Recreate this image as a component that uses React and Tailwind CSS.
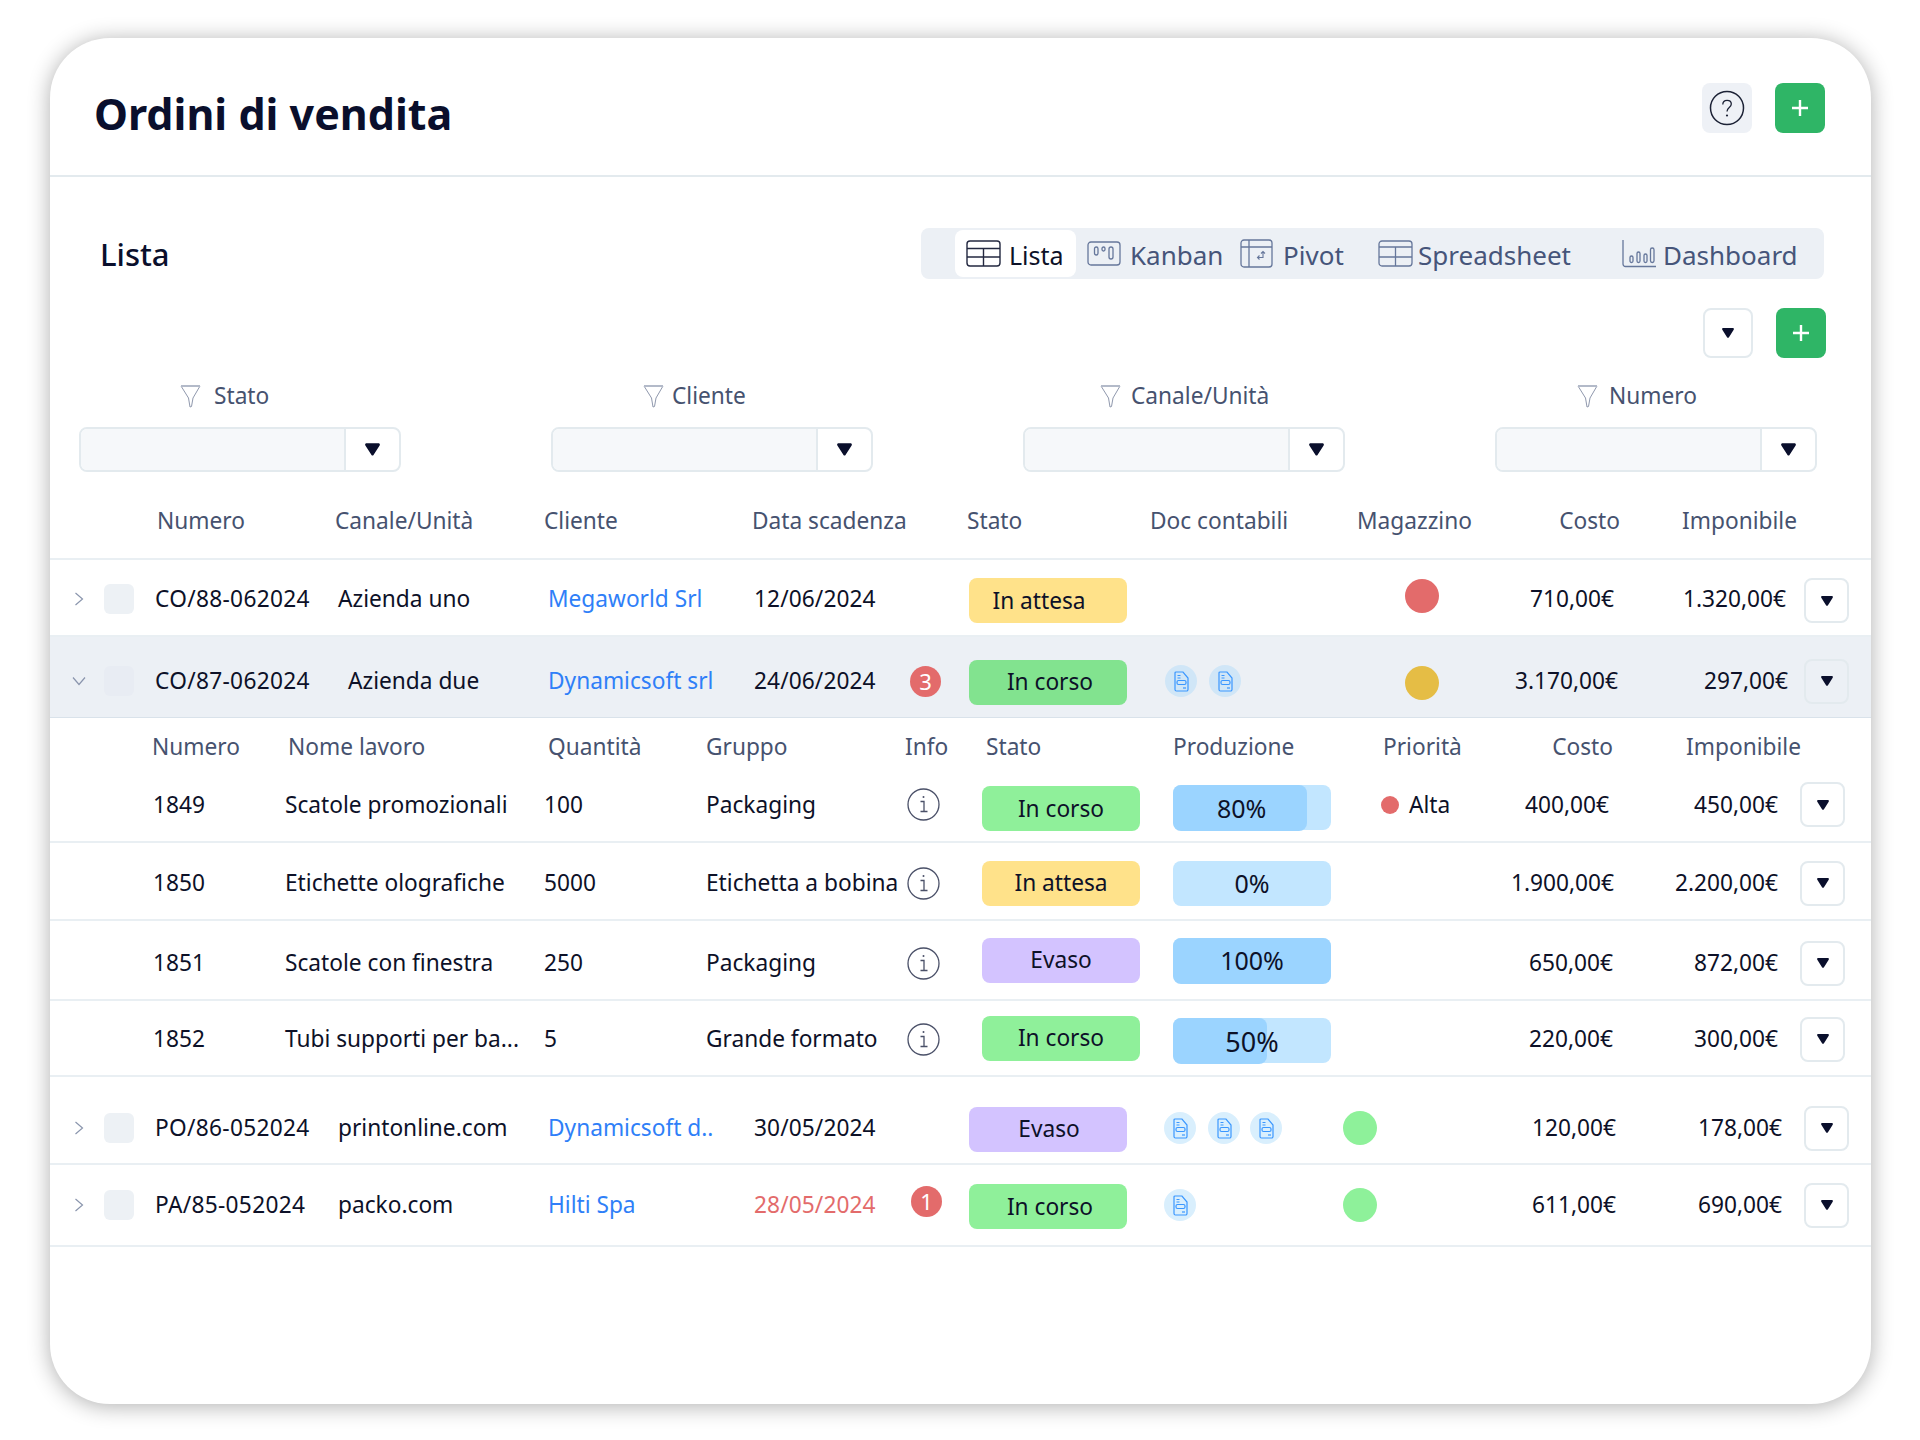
import React from 'react';

const MAIN_COLS = 'grid grid-cols-[54px_51px_183px_210px_206px_155px_61px_194px_179px_147px_130px_184px_1fr] items-center';
const SUB_COLS = 'grid grid-cols-[103px_132px_259px_162px_201px_76px_190px_208px_109px_130px_181px_1fr] items-center';

const PILL = {
  attesa: 'bg-[#ffe28a]',
  corso: 'bg-[#8ff09a]',
  corsoDark: 'bg-[#82e38f]',
  evaso: 'bg-[#d3c3ff]',
};

const Chevron = ({ open }) => (
  <svg width="16" height="16" viewBox="0 0 16 16" fill="none" stroke="#8a95ad" strokeWidth="1.2" className="ml-[21px]">
    {open ? <path d="M2 4.5 8 11.5 14 4.5" /> : <path d="M4.5 2 11.5 8 4.5 14" />}
  </svg>
);

const Caret = ({ className = 'w-[12px] h-[10px]' }) => (
  <svg viewBox="0 0 12 10" className={className} fill="#0a0f2c">
    <path d="M1.2 0h9.6c.9 0 1.4 1 .9 1.7L6.8 9.4c-.4.6-1.2.6-1.6 0L.3 1.7C-.2 1 .3 0 1.2 0z" />
  </svg>
);

const Plus = () => (
  <svg width="18" height="18" viewBox="0 0 18 18" stroke="#fff" strokeWidth="2.4" fill="none">
    <path d="M9 1v16M1 9h16" />
  </svg>
);

const Funnel = () => (
  <svg width="21" height="23" viewBox="0 0 21 23" fill="none" stroke="#8f98ad" strokeWidth="1">
    <path d="M1 1h19L13 13 11.500 21.500 10 22 8.500 13z" />
    <path d="M1 1h19" strokeWidth="2" stroke="#b3bac9" />
  </svg>
);

const DocIcon = ({ className = '' }) => (
  <span className={`w-[32px] h-[32px] rounded-full flex items-center justify-center shrink-0 ${className}`}>
    <svg width="15" height="21" viewBox="0 0 15 21" fill="none" stroke="#3a97ff" strokeWidth="1.200">
      <path d="M2 1h7l5 6v11.500a1.500 1.500 0 0 1-1.500 1.500h-10A1.500 1.500 0 0 1 1 18.500V2a1 1 0 0 1 1-1z" />
      <path d="M3.500 4.500h3M3.500 7h3" />
      <rect x="3" y="9.500" width="9" height="4" rx="1.500" />
      <path d="M9 17h3" />
    </svg>
  </span>
);

const InfoIcon = () => (
  <svg width="33" height="33" viewBox="0 0 33 33" fill="none" stroke="#4a5068" strokeWidth="1.300">
    <circle cx="16.500" cy="16.500" r="15.500" />
    <path d="M13.500 13.500h3.500v10M13.500 23.500h7" />
    <circle cx="16.500" cy="9" r="1" fill="#4a5068" stroke="none" />
  </svg>
);

const HelpIcon = () => (
  <svg width="36" height="36" viewBox="0 0 36 36" fill="none" stroke="#1c2236" strokeWidth="1.500">
    <circle cx="18" cy="18" r="16.500" />
    <path d="M13.800 14.500c0-2.600 2-4.200 4.300-4.200s4.200 1.500 4.200 3.800c0 3.600-4.300 3.400-4.300 7.400" strokeWidth="1.300" />
    <circle cx="18" cy="25.500" r="1.100" fill="#1c2236" stroke="none" />
  </svg>
);

const ListaIcon = ({ color }) => (
  <svg width="35" height="27" viewBox="0 0 35 27" fill="none" stroke={color} strokeWidth="1.400">
    <rect x="1" y="1" width="33" height="25" rx="3" />
    <path d="M1 8.500h33M1 17h33M17.500 8.500V26" />
  </svg>
);

const KanbanIcon = () => (
  <svg width="34" height="25" viewBox="0 0 34 25" fill="none" stroke="#66779b" strokeWidth="1.300">
    <rect x="1" y="1" width="32" height="23" rx="3" />
    <rect x="7.500" y="6" width="3.500" height="8" rx="1.700" />
    <rect x="15" y="6" width="3" height="4" rx="1.500" />
    <rect x="22" y="6" width="4" height="12" rx="2" />
  </svg>
);

const PivotIcon = () => (
  <svg width="33" height="29" viewBox="0 0 33 29" fill="none" stroke="#66779b" strokeWidth="1.300">
    <rect x="1" y="1" width="31" height="27" rx="3" />
    <path d="M1 8h31M9 1v27" />
    <path d="M23 13v5.500h-5M19.500 16.500l-2 2 2 2M21 14.500l2-2 2 2" strokeWidth="1.100" />
  </svg>
);

const SheetIcon = () => (
  <svg width="35" height="27" viewBox="0 0 35 27" fill="none" stroke="#66779b" strokeWidth="1.300">
    <rect x="1" y="1" width="33" height="25" rx="3" />
    <path d="M1 7h33M1 17h33M17.500 7v19" />
  </svg>
);

const DashIcon = () => (
  <svg width="35" height="29" viewBox="0 0 35 29" fill="none" stroke="#66779b" strokeWidth="1.300">
    <path d="M1 1v24a2.500 2.500 0 0 0 2.500 2.500H34" />
    <rect x="8" y="17" width="3" height="6.500" rx="1.500" />
    <rect x="15" y="13" width="3" height="10.500" rx="1.500" />
    <rect x="22" y="15" width="3" height="8.500" rx="1.500" />
    <rect x="28.500" y="9" width="3.500" height="14.500" rx="1.700" />
  </svg>
);

const GreenButton = () => (
  <button className="w-[50px] h-[50px] rounded-lg bg-[#2fb566] flex items-center justify-center">
    <Plus />
  </button>
);

const ActionButton = ({ className = '' }) => (
  <button className={`w-[45px] h-[45px] rounded-lg border-2 border-[#e3eaee] flex items-center justify-center ${className}`}>
    <Caret />
  </button>
);

const Pill = ({ kind, className = '', children }) => (
  <div className={`w-[158px] h-[45px] rounded-lg flex items-center justify-center text-[#0d1128] ${PILL[kind]} ${className}`}>
    {children}
  </div>
);

const Progress = ({ value, label, className = '', textClass = 'text-[25px]' }) => (
  <div className={`relative w-[158px] h-[45px] rounded-lg bg-[#c2e6ff] flex items-center justify-center text-[#0d1128] ${className}`}>
    {value > 0 && (
      <div className="absolute left-0 top-0 h-[46px] rounded-lg bg-[#9bd4ff]" style={{ width: `${value}px` }} />
    )}
    <span className={`relative ${textClass}`}>{label}</span>
  </div>
);

const Badge = ({ n, className = '' }) => (
  <div className={`w-[31px] h-[31px] rounded-full bg-[#e36b6b] text-white flex items-center justify-center text-[22px] ${className}`}>{n}</div>
);

const Dot = ({ color }) => (
  <div className={`w-[34px] h-[34px] rounded-full ${color}`} />
);

const FilterSelect = ({ label, pad, gap }) => (
  <div className="w-[322px]">
    <div className={`h-[30px] flex items-center text-[#46526f] ${pad} ${gap}`}>
      <Funnel />
      <span>{label}</span>
    </div>
    <div className="mt-[16px] h-[45px] rounded-lg border-2 border-[#e3eaee] flex overflow-hidden">
      <div className="flex-1 bg-[#f6f8fa] border-r-2 border-[#e3eaee]" />
      <div className="w-[53px] flex items-center justify-center"><Caret className="w-[15px] h-[13px]" /></div>
    </div>
  </div>
);

const pillLabel = (pill) => (pill === 'evaso' ? 'Evaso' : pill === 'attesa' ? 'In attesa' : 'In corso');

const OrderRow = ({ open, rowClass, numero, canale, canaleClass = '', cliente, data, dataClass = 'text-[#0d1128]', badge, badgeClass, pill, pillClass, docs = [], dotColor, dotClass, costo, costoClass, imp, impClass, actionClass }) => (
  <div className={`${MAIN_COLS} ${rowClass}`}>
    <div><Chevron open={open} /></div>
    <div className={`w-[30px] h-[30px] rounded-md ${open ? 'bg-[#e8ecf3]' : 'bg-[#edf1f5]'}`} />
    <div className="tracking-[0.3px]">{numero}</div>
    <div className={canaleClass}>{canale}</div>
    <div className="text-[#2f7ff8]">{cliente}</div>
    <div className={`tracking-[0.1px] ${dataClass}`}>{data}</div>
    <div>{badge && <Badge n={badge} className={badgeClass} />}</div>
    <div className="-ml-px"><Pill kind={pill} className={pillClass}>{pillLabel(pill)}</Pill></div>
    <div className="flex">
      {docs.map((cls, i) => <DocIcon key={i} className={cls} />)}
    </div>
    <div className={dotClass}><Dot color={dotColor} /></div>
    <div className={`text-right ${costoClass}`}>{costo}</div>
    <div className={`text-right ${impClass}`}>{imp}</div>
    <div><ActionButton className={actionClass} /></div>
  </div>
);

const SubRow = ({ rowClass, numero, nome, qty, gruppo, pill, pillClass, progress, priority, costo, costoClass, imp }) => (
  <div className={`${SUB_COLS} border-b-2 border-[#e9eff3] ${rowClass}`}>
    <div />
    <div>{numero}</div>
    <div>{nome}</div>
    <div>{qty}</div>
    <div>{gruppo}</div>
    <div><InfoIcon /></div>
    <div className="-ml-px"><Pill kind={pill} className={pillClass}>{pillLabel(pill)}</Pill></div>
    <div>{progress}</div>
    <div className="flex items-center gap-[10px]">
      {priority && <><span className="w-[18px] h-[18px] rounded-full bg-[#e36b6b]" /><span>{priority}</span></>}
    </div>
    <div className={`text-right ${costoClass}`}>{costo}</div>
    <div className="text-right pr-[23px]">{imp}</div>
    <div className="-ml-px"><ActionButton /></div>
  </div>
);

const App = () => {
  return (
    <div className="w-[1920px] h-[1440px] bg-white pt-[38px] pl-[50px] font-['Noto_Sans',sans-serif] text-[22.7px] leading-[30px] text-[#0d1128]">
      <div className="w-[1821px] h-[1366px] bg-white rounded-[60px] shadow-[0_2px_22px_rgba(0,0,0,0.32)]">
        {/* intestazione */}
        <div className="h-[139px] border-b-2 border-[#e3eaee] flex items-center justify-between pl-[44px] pr-[46px]">
          <h1 className="text-[43px] leading-[56px] font-bold text-[#0a0f2c] pt-[14px]">Ordini di vendita</h1>
          <div className="flex items-center gap-[23px] pt-[3px]">
            <button className="w-[50px] h-[50px] rounded-lg bg-[#eef1f6] flex items-center justify-center"><HelpIcon /></button>
            <GreenButton />
          </div>
        </div>

        {/* lista e viste */}
        <div className="mt-[51px] h-[51px] flex items-center justify-between pl-[50px] pr-[47px]">
          <h2 className="text-[31px] leading-[40px] font-medium text-[#0a0f2c]">Lista</h2>
          <div className="w-[903px] h-[51px] rounded-lg bg-[#ecf0f5] flex items-center pl-[34px] text-[26px] text-[#46557a]">
            <div className="w-[121px] h-[47px] rounded-lg bg-white flex items-center gap-[8px] pl-[11px] mr-[11px] text-[25px] text-[#0d1128]"><ListaIcon color="#232840" /><span className="pt-[2px]">Lista</span></div>
            <div className="w-[153px] flex items-center gap-[9px]"><KanbanIcon /><span className="pt-[2px]">Kanban</span></div>
            <div className="w-[138px] flex items-center gap-[10px]"><PivotIcon /><span className="pt-[2px]">Pivot</span></div>
            <div className="w-[244px] flex items-center gap-[5px]"><SheetIcon /><span className="pt-[2px]">Spreadsheet</span></div>
            <div className="flex items-center gap-[6px]"><DashIcon /><span className="pt-[2px]">Dashboard</span></div>
          </div>
        </div>

        <div className="mt-[29px] flex justify-end gap-[23px] pr-[45px]">
          <button className="w-[50px] h-[50px] rounded-lg border-2 border-[#e3eaee] flex items-center justify-center"><Caret /></button>
          <GreenButton />
        </div>

        {/* filtri */}
        <div className="mt-[23px] flex gap-[150px] pl-[29px]">
          <FilterSelect label="Stato" pad="pl-[101px]" gap="gap-[13px]" />
          <FilterSelect label="Cliente" pad="pl-[92px]" gap="gap-[8px]" />
          <FilterSelect label="Canale/Unità" pad="pl-[77px]" gap="gap-[10px]" />
          <FilterSelect label="Numero" pad="pl-[82px]" gap="gap-[11px]" />
        </div>

        {/* tabella */}
        <div className={`${MAIN_COLS} h-[88px] pt-[12px] border-b-2 border-[#e9eff3] text-[#46526f]`}>
          <div />
          <div />
          <div className="pl-[2px]">Numero</div>
          <div className="-ml-[3px]">Canale/Unità</div>
          <div className="-ml-[4px]">Cliente</div>
          <div className="-ml-[2px]">Data scadenza</div>
          <div />
          <div className="-ml-[3px]">Stato</div>
          <div className="-ml-[14px]">Doc contabili</div>
          <div className="pl-[14px]">Magazzino</div>
          <div className="text-right">Costo</div>
          <div className="text-right pr-[7px]">Imponibile</div>
          <div />
        </div>

        <OrderRow rowClass="h-[77px] pt-[2px] border-b-2 border-[#e9eff3]" numero="CO/88-062024" canale="Azienda uno" cliente="Megaworld Srl" data="12/06/2024"
          pill="attesa" pillClass="pr-[18px] mt-[4px]" dotColor="bg-[#e36b6b]" dotClass="pl-[62px] mb-[6px]" costo="710,00€" costoClass="pr-[6px]" imp="1.320,00€" impClass="pr-[18px]" actionClass="mt-[4px]" />
        <OrderRow open rowClass="h-[81px] pt-[8px] bg-[#ecf0f5] border-b border-[#d9e2ea]" numero="CO/87-062024" canale="Azienda due" canaleClass="pl-[10px]" cliente="Dynamicsoft srl" data="24/06/2024"
          badge="3" badgeClass="ml-px" pill="corsoDark" pillClass="pl-[4px] mt-[2px]" docs={['bg-[#d0e6f7] ml-[1px]', 'bg-[#d0e6f7] ml-[12px]']} dotColor="bg-[#e5bd45]" dotClass="pl-[62px] mt-[4px]" costo="3.170,00€" costoClass="pr-[2px]" imp="297,00€" impClass="pr-[16px]" />

        {/* lavori dell'ordine */}
        <div className={`${SUB_COLS} h-[60px] pb-[2px] text-[#46526f]`}>
          <div />
          <div className="-ml-px">Numero</div>
          <div className="pl-[3px]">Nome lavoro</div>
          <div className="pl-[4px]">Quantità</div>
          <div>Gruppo</div>
          <div className="-ml-[2px]">Info</div>
          <div className="pl-[3px]">Stato</div>
          <div>Produzione</div>
          <div className="pl-[2px]">Priorità</div>
          <div className="text-right pr-[7px]">Costo</div>
          <div className="text-right">Imponibile</div>
          <div />
        </div>
        <SubRow rowClass="h-[65px] pb-[10px]" numero="1849" nome="Scatole promozionali" qty="100" gruppo="Packaging" pill="corso" pillClass="mt-[8px]"
          progress={<Progress value={134} label="80%" className="justify-start pl-[44px] mt-[6px]" />} priority="Alta" costo="400,00€" costoClass="pr-[11px]" imp="450,00€" />
        <SubRow rowClass="h-[78px] pt-[4px]" numero="1850" nome="Etichette olografiche" qty="5000" gruppo="Etichetta a bobina" pill="attesa"
          progress={<Progress value={0} label="0%" />} costo="1.900,00€" costoClass="pr-[6px]" imp="2.200,00€" />
        <SubRow rowClass="h-[80px] pt-[6px]" numero="1851" nome="Scatole con finestra" qty="250" gruppo="Packaging" pill="evaso" pillClass="mb-[6px]"
          progress={<Progress value={158} label="100%" className="mb-[6px]" />} costo="650,00€" costoClass="pr-[7px]" imp="872,00€" />
        <SubRow rowClass="h-[76px] pt-[2px]" numero="1852" nome="Tubi supporti per ba..." qty="5" gruppo="Grande formato" pill="corso" pillClass="mb-[2px]"
          progress={<Progress value={94} label="50%" className="mt-[3px]" textClass="text-[27px] pt-[2px]" />} costo="220,00€" costoClass="pr-[7px]" imp="300,00€" />

        <OrderRow rowClass="h-[88px] pt-[16px] border-b-2 border-[#e9eff3]" numero="PO/86-052024" canale="printonline.com" cliente="Dynamicsoft d.." data="30/05/2024"
          pill="evaso" pillClass="pl-[2px] mt-[2px]" docs={['bg-[#d9effd]', 'bg-[#d9effd] ml-[12px]', 'bg-[#d9effd] ml-[10px]']} dotColor="bg-[#8ef19a]" dotClass="" costo="120,00€" costoClass="pr-[4px]" imp="178,00€" impClass="pr-[22px]" />
        <OrderRow rowClass="h-[82px] border-b-2 border-[#e9eff3]" numero="PA/85-052024" canale="packo.com" cliente="Hilti Spa" data="28/05/2024" dataClass="text-[#e36b6b]"
          badge="1" badgeClass="ml-[2px] mb-[8px]" pill="corso" pillClass="pl-[4px] mt-[3px]" docs={['bg-[#d9effd]']} dotColor="bg-[#8ef19a]" dotClass="" costo="611,00€" costoClass="pr-[4px]" imp="690,00€" impClass="pr-[22px]" />
      </div>
    </div>
  );
};

export default App;
